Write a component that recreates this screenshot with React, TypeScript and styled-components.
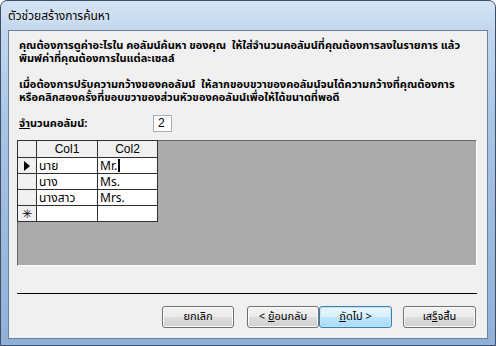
import React from "react";
import styled, { createGlobalStyle } from "styled-components";

const Global = createGlobalStyle`
  html, body { margin: 0; padding: 0; background: #ffffff; }
  * { box-sizing: border-box; }
`;

const THAI = `Tahoma, "Noto Sans Thai", "Noto Sans Thai UI", "Noto Sans", "DejaVu Sans", sans-serif`;
const LATIN = `Tahoma, "Liberation Sans", "Noto Sans Thai", sans-serif`;

const Window = styled.div`
  width: 496px;
  height: 346px;
  border: 1px solid #3d4f66;
  border-radius: 7px 7px 0 0;
  background: linear-gradient(to bottom, #d3e3f4 0px, #c3d8ef 28px, #a9c5e6 120px, #8fb0d8 346px);
  display: flex;
  flex-direction: column;
  overflow: hidden;
`;

const TitleBar = styled.div`
  height: 29px;
  flex: none;
  display: flex;
  align-items: center;
  padding-left: 7px;
  font-family: ${THAI};
  font-size: 12px;
  color: #000;
  text-shadow: 0 0 6px rgba(255, 255, 255, 0.9);
`;

const Client = styled.div`
  flex: 1;
  margin: 0 7px 6px 7px;
  border: 1px solid #6e8198;
  background: #f0f0f0;
  padding: 8px 11px 0 8px;
  display: flex;
  flex-direction: column;
`;

const Para = styled.div<{ $gap?: number }>`
  font-family: ${THAI};
  font-size: 11px;
  font-weight: bold;
  line-height: 13px;
  color: #000;
  padding-left: 2px;
  margin-top: ${(p) => p.$gap ?? 0}px;
  white-space: nowrap;
`;

const CountRow = styled.div`
  display: flex;
  align-items: center;
  height: 17px;
  margin-top: 11px;
  padding-left: 2px;
`;

const Label = styled.label`
  width: 134px;
  font-family: ${THAI};
  font-size: 11px;
  font-weight: bold;
  color: #000;
  u { text-decoration: underline; }
`;

const CountBox = styled.div`
  width: 19px;
  height: 17px;
  border: 1px solid #abadb3;
  background: #fff;
  font-family: ${LATIN};
  font-size: 12px;
  line-height: 15px;
  padding-left: 4px;
  color: #000;
`;

const GrayArea = styled.div`
  margin-top: 8px;
  width: 460px;
  height: 126px;
  background: #ababab;
  border-top: 1px solid #696969;
  border-left: 1px solid #696969;
  border-right: 1px solid #ffffff;
  border-bottom: 1px solid #ffffff;
  position: relative;
`;

const Table = styled.table`
  border-collapse: collapse;
  margin: -1px 0 0 -1px;
  font-family: ${THAI};
  font-size: 12px;
  color: #000;
`;

const Th = styled.th<{ $w: number }>`
  width: ${(p) => p.$w}px;
  height: 17px;
  padding: 0;
  border: 1px solid #303030;
  background: #f0f0f0;
  font-weight: normal;
  font-family: ${LATIN};
  font-size: 12px;
  text-align: center;
  line-height: 14px;
`;

const Sel = styled.td`
  width: 19px;
  height: 16px;
  padding: 0;
  border: 1px solid #303030;
  background: #f0f0f0;
  text-align: center;
  vertical-align: middle;
  line-height: 14px;
`;

const Td = styled.td`
  height: 16px;
  padding: 0 0 0 2px;
  border: 1px solid #303030;
  background: #fff;
  line-height: 14px;
  white-space: nowrap;
`;

const Caret = styled.span`
  display: inline-block;
  width: 2px;
  height: 13px;
  background: #000;
  vertical-align: -2px;
  margin-left: 1px;
`;

const Pointer = styled.span`
  display: inline-block;
  width: 0;
  height: 0;
  border-top: 5px solid transparent;
  border-bottom: 5px solid transparent;
  border-left: 6px solid #000;
  vertical-align: middle;
`;

const Star = styled.span`
  font-family: "DejaVu Sans", sans-serif;
  font-size: 12px;
  line-height: 14px;
`;

const Separator = styled.div`
  margin-top: 27px;
  width: 460px;
  height: 1px;
  background: #000;
  flex: none;
`;

const ButtonRow = styled.div`
  margin-top: 12px;
  display: flex;
  justify-content: flex-end;
`;

const Button = styled.button<{ $focus?: boolean; $w: number; $ml: number }>`
  width: ${(p) => p.$w}px;
  height: 22px;
  margin-left: ${(p) => p.$ml}px;
  padding: 0;
  border: 1px solid ${(p) => (p.$focus ? "#3c7fb1" : "#707070")};
  border-radius: 3px;
  background: ${(p) =>
    p.$focus
      ? "linear-gradient(to bottom, #eaf6fd 0%, #d9f0fc 50%, #bee6fd 51%, #a7d9f5 100%)"
      : "linear-gradient(to bottom, #f2f2f2 0%, #ebebeb 50%, #dddddd 51%, #cfcfcf 100%)"};
  box-shadow: inset 0 0 0 1px ${(p) => (p.$focus ? "#c4e5f6" : "#fcfcfc")};
  font-family: ${THAI};
  font-size: 11px;
  color: #000;
  line-height: 18px;
  u { text-decoration: underline; }
`;

export default function App() {
  return (
    <>
      <Global />
      <Window>
        <TitleBar>ตัวช่วยสร้างการค้นหา</TitleBar>
        <Client>
          <Para>
            คุณต้องการดูค่าอะไรใน คอลัมน์ค้นหา ของคุณ&nbsp; ให้ใส่จำนวนคอลัมน์ที่คุณต้องการลงในรายการ แล้ว
            <br />
            พิมพ์ค่าที่คุณต้องการในแต่ละเซลล์
          </Para>
          <Para $gap={13}>
            เมื่อต้องการปรับความกว้างของคอลัมน์&nbsp; ให้ลากขอบขวาของคอลัมน์จนได้ความกว้างที่คุณต้องการ
            <br />
            หรือคลิกสองครั้งที่ขอบขวาของส่วนหัวของคอลัมน์เพื่อให้ได้ขนาดที่พอดี
          </Para>
          <CountRow>
            <Label>
              <u>จ</u>ำนวนคอลัมน์:
            </Label>
            <CountBox>2</CountBox>
          </CountRow>
          <GrayArea>
            <Table>
              <thead>
                <tr>
                  <Th $w={19}></Th>
                  <Th $w={61}>Col1</Th>
                  <Th $w={60}>Col2</Th>
                </tr>
              </thead>
              <tbody>
                <tr>
                  <Sel>
                    <Pointer />
                  </Sel>
                  <Td>นาย</Td>
                  <Td>
                    Mr.
                    <Caret />
                  </Td>
                </tr>
                <tr>
                  <Sel />
                  <Td>นาง</Td>
                  <Td>Ms.</Td>
                </tr>
                <tr>
                  <Sel />
                  <Td>นางสาว</Td>
                  <Td>Mrs.</Td>
                </tr>
                <tr>
                  <Sel>
                    <Star>✳</Star>
                  </Sel>
                  <Td />
                  <Td />
                </tr>
              </tbody>
            </Table>
          </GrayArea>
          <Separator />
          <ButtonRow>
            <Button $w={72} $ml={0}>ยกเลิก</Button>
            <Button $w={72} $ml={13}>
              &lt; <u>ย</u>้อนกลับ
            </Button>
            <Button $w={73} $ml={0} $focus>
              <u>ถ</u>ัดไป &gt;
            </Button>
            <Button $w={73} $ml={11}>
              เส<u>ร</u>็จสิ้น
            </Button>
          </ButtonRow>
        </Client>
      </Window>
    </>
  );
}
